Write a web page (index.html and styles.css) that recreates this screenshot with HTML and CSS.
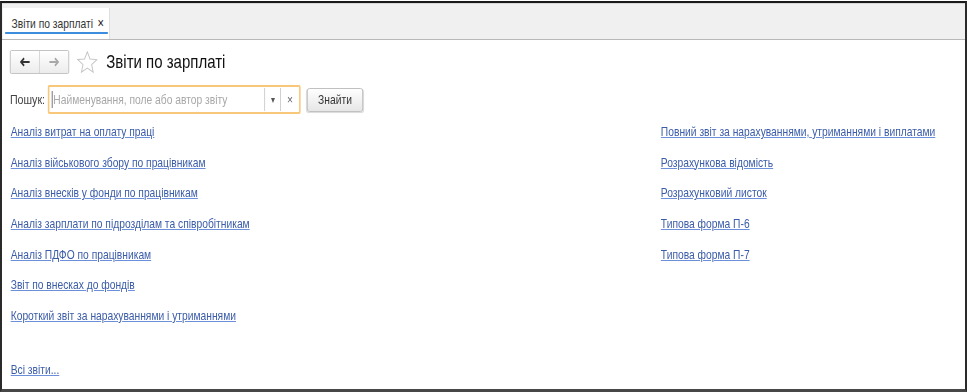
FILE: index.html
```html
<!DOCTYPE html>
<html lang="uk">
<head>
  <meta charset="UTF-8" />
  <title>Звіти по зарплаті</title>
  <link rel="stylesheet" href="styles.css">
</head>
<body>
  <div class="window">
    <div class="canvas">
      <div class="tabs">
        <div class="tab active">Звіти по зарплаті <span class="tab-close">×</span></div>
      </div>

      <div class="page">
        <div class="toolbar">
          <div class="nav-buttons">
            <button class="nav-btn">
              <svg width="14" height="10" viewBox="0 0 14 10"><path d="M2 5h11M6 1.2L2 5l4 3.8" stroke="#333" stroke-width="2" fill="none"/></svg>
            </button>
            <button class="nav-btn">
              <svg width="14" height="10" viewBox="0 0 14 10"><path d="M1 5h11M8 1.2L12 5l-4 3.8" stroke="#a8a8a8" stroke-width="2" fill="none"/></svg>
            </button>
          </div>
          <svg class="star" width="26" height="23" viewBox="0 0 22 22" preserveAspectRatio="none"><path d="M11 0.8l2.9 6.8 7.3.6-5.6 4.8 1.7 7.2-6.3-3.8-6.3 3.8 1.7-7.2L0.8 8.2l7.3-.6z" fill="#fff" stroke="#c4c4c4" stroke-width="1"/></svg>
          <h1 class="title">Звіти по зарплаті</h1>
        </div>

        <div class="search-row">
          <label class="search-label">Пошук:</label>
          <div class="search-box">
            <span class="cursor"></span>
            <span class="placeholder">Найменування, поле або автор звіту</span>
            <span class="search-drop">▾</span>
            <span class="search-clear">×</span>
          </div>
          <button class="find-btn">Знайти</button>
        </div>

        <div class="reports">
          <div class="col">
            <a href="#">Аналіз витрат на оплату праці</a>
            <a href="#">Аналіз військового збору по працівникам</a>
            <a href="#">Аналіз внесків у фонди по працівникам</a>
            <a href="#">Аналіз зарплати по підрозділам та співробітникам</a>
            <a href="#">Аналіз ПДФО по працівникам</a>
            <a href="#">Звіт по внесках до фондів</a>
            <a href="#">Короткий звіт за нарахуваннями і утриманнями</a>
          </div>
          <div class="col">
            <a href="#">Повний звіт за нарахуваннями, утриманнями і виплатами</a>
            <a href="#">Розрахункова відомість</a>
            <a href="#">Розрахунковий листок</a>
            <a href="#">Типова форма П-6</a>
            <a href="#">Типова форма П-7</a>
          </div>
        </div>

        <a class="all-link" href="#">Всі звіти...</a>
      </div>
    </div>
  </div>
</body>
</html>
```

FILE: styles.css
```css
body {
  margin: 0;
  padding: 0;
  background: #fff;
  font-family: "Liberation Sans", Arial, sans-serif;
}
.window {
  box-sizing: border-box;
  width: 967px;
  height: 391px;
  margin-top: 1px;
  border-left: 2px solid #2a2a2a;
  border-top: 2px solid #1a1a1a;
  border-right: 2px solid #2a2a2a;
  border-bottom: 3px solid #474747;
  overflow: hidden;
}
.canvas {
  width: 1219px;
  height: 100%;
  transform: scaleX(0.79);
  transform-origin: 0 0;
  display: flex;
  flex-direction: column;
}
.tabs {
  flex-shrink: 0;
  height: 35px;
  background: #f0f0f0;
  border-top: 1px solid #d8d8d8;
  border-bottom: 1px solid #b8b8b8;
  display: flex;
  align-items: stretch;
}
.tab {
  box-sizing: border-box;
  width: 136px;
  margin-left: 1px;
  margin-top: 4px;
  background: #fff;
  border-right: 1px solid #c8c8c8;
  padding: 7px 0 0 11px;
  font-size: 13px;
  color: #333;
  white-space: nowrap;
  position: relative;
}
.tab.active::after {
  content: "";
  position: absolute;
  left: 3px;
  right: 2px;
  bottom: 5px;
  height: 2px;
  background: #3c8dde;
}
.tab-close {
  font-size: 14px;
  color: #222;
  margin-left: 2px;
}
.page {
  flex: 1;
  min-height: 0;
  padding: 10px 0 0 10px;
  display: flex;
  flex-direction: column;
}
.toolbar {
  flex-shrink: 0;
  display: flex;
  align-items: center;
  height: 24px;
}
.nav-buttons {
  display: flex;
  box-sizing: border-box;
  width: 75px;
  height: 24px;
  border: 1px solid #bdbdbd;
  border-radius: 2px;
  background: linear-gradient(#fff, #ececec);
}
.nav-btn {
  flex: 1;
  border: none;
  background: none;
  padding: 0;
  display: flex;
  align-items: center;
  justify-content: center;
}
.nav-btn + .nav-btn {
  border-left: 1px solid #cfcfcf;
}
.star {
  margin-left: 10px;
}
.title {
  margin: 0 0 0 11px;
  font-size: 19px;
  font-weight: normal;
  color: #111;
}
.search-row {
  flex-shrink: 0;
  display: flex;
  align-items: center;
  margin-top: 11px;
}
.search-label {
  font-size: 13.5px;
  color: #444;
  width: 48px;
}
.search-box {
  box-sizing: border-box;
  width: 320px;
  height: 29px;
  border: 2px solid #f8c77a;
  border-radius: 2px;
  display: flex;
  align-items: center;
}
.cursor {
  width: 1px;
  height: 17px;
  background: #555;
  margin-left: 3px;
}
.placeholder {
  flex: 1;
  font-size: 13px;
  color: #a8a8a8;
  margin-left: 1px;
}
.search-drop {
  width: 19px;
  height: 23px;
  border-left: 1px solid #c4c4c4;
  border-right: 1px solid #c4c4c4;
  font-size: 10px;
  color: #555;
  text-align: center;
  line-height: 23px;
}
.search-clear {
  width: 23px;
  font-size: 13px;
  color: #666;
  text-align: center;
}
.find-btn {
  margin-left: 8px;
  width: 71px;
  height: 24px;
  font-family: inherit;
  font-size: 13px;
  color: #333;
  border: 1px solid #b8b8b8;
  border-radius: 3px;
  background: linear-gradient(#fff, #e6e6e6);
  box-shadow: 0 1px 1px rgba(0, 0, 0, 0.15);
}
.reports {
  flex-shrink: 0;
  display: flex;
  margin-top: 10px;
}
.col {
  display: flex;
  flex-direction: column;
  align-items: flex-start;
}
.col:first-child {
  width: 823px;
}
.col a,
.all-link {
  font-size: 13px;
  line-height: 15px;
  color: #3b5ca8;
  text-decoration: underline;
  text-decoration-color: #6b8fd8;
  margin: 0 0 15.7px 1px;
}
.all-link {
  margin: 23px 0 0 1px;
  align-self: flex-start;
}
```
